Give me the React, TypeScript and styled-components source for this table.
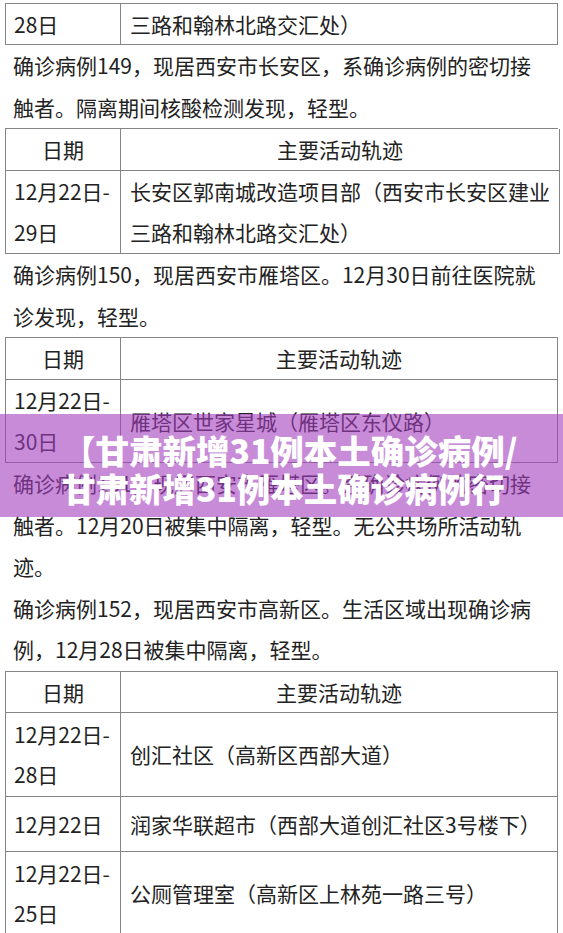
import React from "react";
import styled, { createGlobalStyle } from "styled-components";

const Global = createGlobalStyle`
  html, body { margin: 0; padding: 0; background: #ffffff; }
  body {
    font-family: "Noto Sans CJK SC", "Noto Sans", sans-serif;
    color: #222222;
    -webkit-font-smoothing: antialiased;
  }
`;

const Page = styled.div`
  position: relative;
  width: 563px;
  height: 933px;
  overflow: hidden;
  padding-top: 3px;
  box-sizing: border-box;
  font-size: 21px;
`;

const Table = styled.div<{ $lh: number }>`
  display: grid;
  grid-template-columns: 115px 1fr;
  margin: 0 5px 0 5px;
  border-top: 1px solid #858585;
  border-left: 1px solid #858585;
  line-height: ${(p) => p.$lh}px;
`;

const Cell = styled.div<{ $head?: boolean; $h?: number; $wide?: boolean }>`
  display: flex;
  flex-direction: column;
  justify-content: center;
  align-items: ${(p) => (p.$head ? "center" : "flex-start")};
  min-height: ${(p) => p.$h ?? 0}px;
  padding: 0 ${(p) => (p.$wide ? 9 : 8)}px;
  border-right: 1px solid #858585;
  border-bottom: 1px solid #858585;
  white-space: nowrap;
`;

const Line = styled.span`
  display: block;
`;

const Para = styled.p`
  margin: 0;
  padding: 0 13px;
  line-height: 41.5px;
  white-space: nowrap;
`;

const Banner = styled.div`
  position: absolute;
  left: 0;
  right: 0;
  top: 414px;
  height: 103px;
  box-sizing: border-box;
  padding: 17px 0 0 62px;
  background: rgba(163, 62, 190, 0.6);
  color: #ffffff;
  font-size: 33.5px;
  font-weight: 900;
  line-height: 38px;
  text-align: left;
  white-space: nowrap;
`;

type Row = { date: string[]; place: string[]; h?: number };

function Track({ rows, lh, headH, first }: { rows: Row[]; lh: number; headH?: number; first?: boolean }) {
  return (
    <Table $lh={lh}>
      {!first && (
        <>
          <Cell $head $h={headH}>日期</Cell>
          <Cell $head $wide $h={headH}>主要活动轨迹</Cell>
        </>
      )}
      {rows.map((r, i) => (
        <React.Fragment key={i}>
          <Cell $h={r.h}>
            {r.date.map((d, j) => (
              <Line key={j}>{d}</Line>
            ))}
          </Cell>
          <Cell $wide $h={r.h}>
            {r.place.map((d, j) => (
              <Line key={j}>{d}</Line>
            ))}
          </Cell>
        </React.Fragment>
      ))}
    </Table>
  );
}

export default function App() {
  return (
    <>
      <Global />
      <Page>
        <Track first lh={40} rows={[{ date: ["28日"], place: ["三路和翰林北路交汇处）"] }]} />
        <Para>
          <Line>确诊病例149，现居西安市长安区，系确诊病例的密切接</Line>
          <Line>触者。隔离期间核酸检测发现，轻型。</Line>
        </Para>
        <Track
          lh={41}
          rows={[
            {
              date: ["12月22日-", "29日"],
              place: ["长安区郭南城改造项目部（西安市长安区建业", "三路和翰林北路交汇处）"],
            },
          ]}
        />
        <Para>
          <Line>确诊病例150，现居西安市雁塔区。12月30日前往医院就</Line>
          <Line>诊发现，轻型。</Line>
        </Para>
        <Track
          lh={41}
          rows={[{ date: ["12月22日-", "30日"], place: ["雁塔区世家星城（雁塔区东仪路）"], h: 82 }]}
        />
        <Para>
          <Line>确诊病例151，现居西安市雁塔区。系确诊病例的密切接</Line>
          <Line>触者。12月20日被集中隔离，轻型。无公共场所活动轨</Line>
          <Line>迹。</Line>
          <Line>确诊病例152，现居西安市高新区。生活区域出现确诊病</Line>
          <Line>例，12月28日被集中隔离，轻型。</Line>
        </Para>
        <Track
          lh={40}
          headH={37}
          rows={[
            { date: ["12月22日-", "28日"], place: ["创汇社区（高新区西部大道）"], h: 83 },
            { date: ["12月22日"], place: ["润家华联超市（西部大道创汇社区3号楼下）"], h: 54 },
            { date: ["12月22日-", "25日"], place: ["公厕管理室（高新区上林苑一路三号）"], h: 82 },
          ]}
        />
        <Banner>
          <Line>【甘肃新增31例本土确诊病例/</Line>
          <Line>甘肃新增31例本土确诊病例行</Line>
        </Banner>
      </Page>
    </>
  );
}
